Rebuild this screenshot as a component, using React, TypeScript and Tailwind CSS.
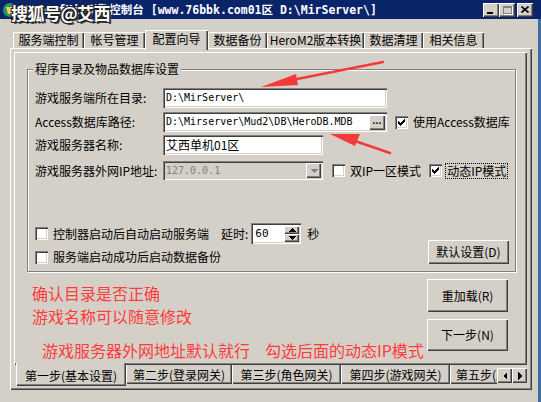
import React from "react";

const raised =
  "bg-[#d4d0c8] shadow-[inset_1px_1px_0_#fff,inset_-1px_-1px_0_#404040,inset_-2px_-2px_0_#808080]";
const sunken =
  "shadow-[inset_1px_1px_0_#808080,inset_2px_2px_0_#404040,inset_-1px_-1px_0_#fff,inset_-2px_-2px_0_#d4d0c8]";
const mono = "[font-family:'DejaVu_Sans_Mono','Noto_Sans_CJK_SC',monospace]";

const Check = ({ checked }: { checked?: boolean }) => (
  <span className={`w-[13px] h-[13px] shrink-0 bg-white flex items-center justify-center ${sunken}`}>
    {checked && (
      <svg width="7" height="7" viewBox="0 0 7 7" shapeRendering="crispEdges">
        <path
          d="M0 2h1v3H0z M1 3h1v3H1z M2 4h1v3H2z M3 3h1v3H3z M4 2h1v3H4z M5 1h1v3H5z M6 0h1v3H6z"
          fill="#000"
        />
      </svg>
    )}
  </span>
);

const Tri = ({ dir, color = "#000" }: { dir: "up" | "down" | "left" | "right"; color?: string }) => {
  const pts = {
    up: "0,4 4,0 8,4",
    down: "0,0 8,0 4,4",
    left: "4,0 4,8 0,4",
    right: "0,0 0,8 4,4",
  }[dir];
  const w = dir === "up" || dir === "down" ? 8 : 4;
  const h = dir === "up" || dir === "down" ? 4 : 8;
  return (
    <svg width={w} height={h} viewBox={`0 0 ${w} ${h}`} shapeRendering="crispEdges">
      <polygon points={pts} fill={color} />
    </svg>
  );
};

const TitleBar = () => (
  <div className="h-[19px] bg-[#0a246a] flex items-center text-white">
    <svg width="16" height="16" viewBox="0 0 16 16" className="ml-[2px]">
      <circle cx="8" cy="8" r="7" fill="#2f8f6f" />
      <path d="M4 5h8l-2 7H6z" fill="#f2d24a" />
    </svg>
    <span className={`ml-[6px] text-[11.5px] font-bold whitespace-pre ${mono}`}>
      {"GameOfMir引擎控制台 [www.76bbk.com01区 D:\\MirServer\\]"}
    </span>
    <div className="ml-auto mr-[8px] flex items-center">
      <div className={`w-[16px] h-[14px] flex items-end pl-[4px] pb-[3px] ${raised}`}>
        <div className="w-[6px] h-[2px] bg-black" />
      </div>
      <div className={`w-[16px] h-[14px] flex items-center justify-center ${raised}`}>
        <div className="w-[9px] h-[8px] border border-t-2 border-[#808080] shadow-[1px_1px_0_#fff]" />
      </div>
      <div className={`ml-[2px] w-[16px] h-[14px] flex items-center justify-center ${raised}`}>
        <svg width="8" height="7" viewBox="0 0 8 7">
          <path d="M0.5 0.5l7 6M7.5 0.5l-7 6" stroke="#000" strokeWidth="1.6" />
        </svg>
      </div>
    </div>
  </div>
);

const topTabs = [
  { label: "服务端控制", w: "w-[71px]" },
  { label: "帐号管理", w: "w-[61px]" },
  { label: "配置向导", w: "w-[63px]", active: true },
  { label: "数据备份", w: "w-[59px]" },
  { label: "HeroM2版本转换", w: "w-[97px]" },
  { label: "数据清理", w: "w-[59px]" },
  { label: "相关信息", w: "w-[61px]" },
];

const stepTabs = [
  { label: "第二步(登录网关)", w: "w-[106px]" },
  { label: "第三步(角色网关)", w: "w-[109px]" },
  { label: "第四步(游戏网关)", w: "w-[109px]" },
];

const tabFace =
  "shadow-[inset_1px_1px_0_#fff,inset_-1px_0_0_#404040,inset_-2px_0_0_#808080]";
const stepFace =
  "shadow-[inset_1px_0_0_#fff,inset_-1px_-1px_0_#404040,inset_-2px_-2px_0_#808080]";

const Field = ({ w, children, grey }: { w: string; children: React.ReactNode; grey?: boolean }) => (
  <div className={`${w} h-full flex items-center pl-[3px] pr-[2px] ${grey ? "bg-[#d4d0c8]" : "bg-white"} ${sunken}`}>
    {children}
  </div>
);

export default function App() {
  return (
    <div className="w-[541px] h-[402px] bg-[#d4d0c8] overflow-hidden relative text-[12px] leading-[14px] text-black [font-family:'Noto_Sans_CJK_SC',sans-serif]">
      <TitleBar />
      <div className="flex h-[383px]">
        <div className="w-[538px]">
          {/* top page tabs */}
          <div className="mt-[11px] pl-[13px] h-[18px] flex items-end">
            {topTabs.map((t) =>
              t.active ? (
                <div
                  key={t.label}
                  className={`${t.w} h-[20px] -mb-[2px] relative z-10 bg-[#d4d0c8] flex items-center justify-center pb-[2px] ${tabFace}`}
                >
                  {t.label}
                </div>
              ) : (
                <div key={t.label} className={`${t.w} h-[16px] flex items-center justify-center ${tabFace}`}>
                  {t.label}
                </div>
              )
            )}
          </div>

          {/* outer page */}
          <div className={`ml-[10px] w-[522px] h-[342px] pt-[4px] pl-[4px] ${raised}`}>
            <div className="w-[513px]">
              {/* inner page */}
              <div className={`h-[313px] pt-[10px] ${raised}`}>
                <fieldset className="ml-[13px] w-[489px] h-[210px] border border-[#808080] shadow-[1px_1px_0_#fff,inset_1px_1px_0_#fff]">
                  <legend className="ml-[5px] px-[2px] leading-[14px] bg-[#d4d0c8]">程序目录及物品数据库设置</legend>

                  <div className="mt-[12px] h-[20px] flex items-center">
                    <span className="pl-[7px] w-[135px]">游戏服务端所在目录:</span>
                    <Field w="w-[224px]">
                      <span className={`text-[10px] ${mono}`}>{"D:\\MirServer\\"}</span>
                    </Field>
                  </div>

                  <div className="mt-[4px] h-[20px] flex items-center">
                    <span className="pl-[7px] w-[135px]">Access数据库路径:</span>
                    <Field w="w-[224px]">
                      <span className={`text-[10px] whitespace-pre ${mono}`}>
                        {"D:\\Mirserver\\Mud2\\DB\\HeroDB.MDB"}
                      </span>
                      <div className={`ml-auto w-[16px] h-[15px] flex items-center justify-center text-[9px] font-bold leading-none pb-[3px] ${raised}`}>
                        ...
                      </div>
                    </Field>
                    <span className="ml-[8px]">
                      <Check checked />
                    </span>
                    <span className="ml-[5px]">使用Access数据库</span>
                  </div>

                  <div className="mt-[3px] h-[20px] flex items-center">
                    <span className="pl-[7px] w-[135px]">游戏服务器名称:</span>
                    <Field w="w-[160px]">
                      <span>艾西单机01区</span>
                    </Field>
                  </div>

                  <div className="mt-[6px] h-[19px] flex items-center">
                    <span className="pl-[7px] w-[135px]">游戏服务器外网IP地址:</span>
                    <Field w="w-[160px]" grey>
                      <span className={`text-[10px] text-[#808080] ${mono}`}>127.0.0.1</span>
                      <div className={`ml-auto w-[15px] h-[15px] flex items-center justify-center ${raised}`}>
                        <Tri dir="down" color="#808080" />
                      </div>
                    </Field>
                    <span className="ml-[9px]">
                      <Check />
                    </span>
                    <span className="ml-[5px]">双IP一区模式</span>
                    <span className="ml-[8px]">
                      <Check checked />
                    </span>
                    <span className="ml-[3px] px-[1px] border border-dotted border-black leading-[14px]">动态IP模式</span>
                  </div>

                  <div className="mt-[43px] flex items-end">
                    <div>
                      <div className="h-[21px] flex items-center">
                        <span className="ml-[7px]">
                          <Check />
                        </span>
                        <span className="ml-[5px]">控制器启动后自动启动服务端</span>
                        <span className="ml-[12px]">延时:</span>
                        <div className={`ml-[3px] w-[50px] h-[21px] bg-white flex items-center pl-[4px] pr-[2px] ${sunken}`}>
                          <span className={`text-[11px] ${mono}`}>60</span>
                          <div className="ml-auto flex flex-col">
                            <div className={`w-[15px] h-[8px] flex items-center justify-center ${raised}`}>
                              <Tri dir="up" />
                            </div>
                            <div className={`w-[15px] h-[8px] flex items-center justify-center ${raised}`}>
                              <Tri dir="down" />
                            </div>
                          </div>
                        </div>
                        <span className="ml-[6px]">秒</span>
                      </div>
                      <div className="mt-[6px] h-[14px] flex items-center">
                        <span className="ml-[7px]">
                          <Check />
                        </span>
                        <span className="ml-[5px]">服务端启动成功后启动数据备份</span>
                      </div>
                    </div>
                    <button className={`ml-auto mr-[6px] w-[81px] h-[24px] flex items-center justify-center ${raised}`}>
                      默认设置(D)
                    </button>
                  </div>
                </fieldset>

                <div className="flex">
                  <div className="w-[413px] pl-[18px] mt-[10px] text-[16px] leading-[23px] text-[#ff3b3b]">
                    <div>确认目录是否正确</div>
                    <div>游戏名称可以随意修改</div>
                    <div className="mt-[11px] ml-[10px] whitespace-pre">
                      游戏服务器外网地址默认就行<span className="inline-block w-[15px]" />勾选后面的动态IP模式
                    </div>
                  </div>
                  <div>
                    <button className={`mt-[7px] w-[81px] h-[33px] flex items-center justify-center ${raised}`}>
                      重加载(R)
                    </button>
                    <button className={`mt-[7px] w-[81px] h-[32px] flex items-center justify-center ${raised}`}>
                      下一步(N)
                    </button>
                  </div>
                </div>
              </div>

              {/* step tabs along the bottom */}
              <div className="pl-[2px] h-[22px] flex items-start">
                <div className={`w-[110px] h-[23px] -mt-[2px] relative z-10 bg-[#d4d0c8] flex items-center justify-center pt-[3px] ${stepFace}`}>
                  第一步(基本设置)
                </div>
                {stepTabs.map((t) => (
                  <div key={t.label} className={`${t.w} h-[19px] flex items-center justify-center ${stepFace}`}>
                    {t.label}
                  </div>
                ))}
                <div className="w-[47px] h-[19px] overflow-hidden">
                  <div className={`w-[109px] h-[19px] flex items-center pl-[6px] ${stepFace}`}>第五步(服务器)</div>
                </div>
                <div className={`mt-[3px] w-[15px] h-[15px] flex items-center justify-center ${raised}`}>
                  <Tri dir="left" />
                </div>
                <div className={`mt-[3px] w-[15px] h-[15px] flex items-center justify-center ${raised}`}>
                  <Tri dir="right" />
                </div>
              </div>
            </div>
          </div>
        </div>
        <div className="w-[3px] bg-[#3a6ea5]" />
      </div>

      {/* watermark over the caption */}
      <div className="absolute left-[11px] top-[3px] text-[17px] leading-[20px] font-bold tracking-[-0.5px] text-white [text-shadow:1px_1px_0_#222,-1px_-1px_0_#222,1px_-1px_0_#222,-1px_1px_0_#222,2px_2px_0_#444]">
        搜狐号@艾西
      </div>

      {/* red pointer arrows */}
      <svg className="absolute left-0 top-0 pointer-events-none" width="541" height="402" viewBox="0 0 541 402">
        <path d="M383 62 L292 80" stroke="#f23a3a" strokeWidth="2.5" strokeLinecap="round" />
        <polygon points="261,87 296,74 298,85" fill="#f23a3a" />
        <path d="M390 153 L355 141" stroke="#f23a3a" strokeWidth="2.5" strokeLinecap="round" />
        <polygon points="330,134 360,134 355,146" fill="#f23a3a" />
      </svg>
    </div>
  );
}
